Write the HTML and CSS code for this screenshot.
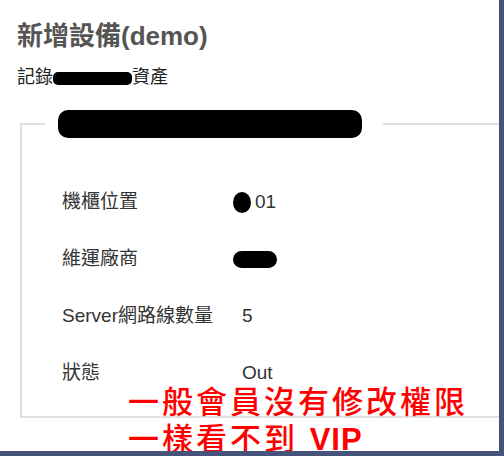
FILE: index.html
```html
<!DOCTYPE html>
<html lang="zh-Hant">
<head>
    <meta charset="UTF-8">
    <meta name="viewport" content="width=device-width, initial-scale=1.0">
    <title>新增設備(demo)</title>
    <link rel="stylesheet" href="styles.css">
</head>
<body>
    <div class="shot">
        <h1 class="title">新增設備(demo)</h1>
        <p class="subtitle">記錄<span class="blot blot-sub"></span>資產</p>

        <fieldset class="device">
            <legend class="device-legend"><span class="blot blot-legend"></span></legend>
            <div class="rows">
                <div class="row">
                    <span class="label">機櫃位置</span>
                    <span class="value"><span class="blot blot-dot"></span>01</span>
                </div>
                <div class="row">
                    <span class="label">維運廠商</span>
                    <span class="value"><span class="blot blot-pill"></span></span>
                </div>
                <div class="row">
                    <span class="label">Server網路線數量</span>
                    <span class="value">5</span>
                </div>
                <div class="row">
                    <span class="label">狀態</span>
                    <span class="value">Out</span>
                </div>
            </div>
        </fieldset>

        <div class="note">
            <div>一般會員沒有修改權限</div>
            <div class="note-second">一樣看不到 <b class="note-vip">VIP</b></div>
        </div>
    </div>
</body>
</html>
```

FILE: styles.css
```css
body {
    margin: 0;
    background-color: #fff;
    font-family: "Liberation Sans", "Noto Sans CJK TC", sans-serif;
}

.shot {
    position: relative;
    width: 499px;
    height: 451px;
    overflow: hidden;
    background-color: #fff;
    border-right: 5px solid #46537a;
    border-bottom: 5px solid #46537a;
}

.title {
    margin: 0;
    padding: 20px 0 0 17px;
    font-size: 26px;
    line-height: 32px;
    font-weight: bold;
    color: #555;
}

.subtitle {
    margin: 13px 0 0 0;
    padding-left: 17px;
    font-size: 18px;
    line-height: 24px;
    color: #222;
}

.blot {
    display: inline-block;
    background-color: #000;
    vertical-align: middle;
}

.blot-sub {
    width: 79px;
    height: 13px;
    border-radius: 5px;
}

.device {
    width: 520px;
    margin: 21px 0 0 20px;
    padding: 0;
    border: 2px solid #e0e0e0;
    box-sizing: border-box;
}

.device-legend {
    margin-left: 23px;
    padding: 0 21px 0 13px;
    line-height: 0;
}

.blot-legend {
    width: 304px;
    height: 28px;
    border-radius: 10px;
}

.rows {
    padding: 35px 0 15px 40px;
}

.row {
    display: grid;
    grid-template-columns: 180px 1fr;
    height: 57px;
    line-height: 57px;
    font-size: 19px;
    color: #333;
}

.blot-dot {
    width: 18px;
    height: 21px;
    margin-left: -9px;
    margin-right: 4px;
    border-radius: 50%;
}

.blot-pill {
    width: 44px;
    height: 17px;
    margin-left: -9px;
    border-radius: 9px;
}

/* red annotation drawn over the form */
.note {
    position: absolute;
    left: 128px;
    top: 387px;
    font-size: 31px;
    line-height: 32px;
    letter-spacing: 3px;
    font-weight: 500;
    color: #f00;
}

.note-second {
    margin-top: 5px;
}

.note-vip {
    font-weight: bold;
    letter-spacing: 1px;
}
```
